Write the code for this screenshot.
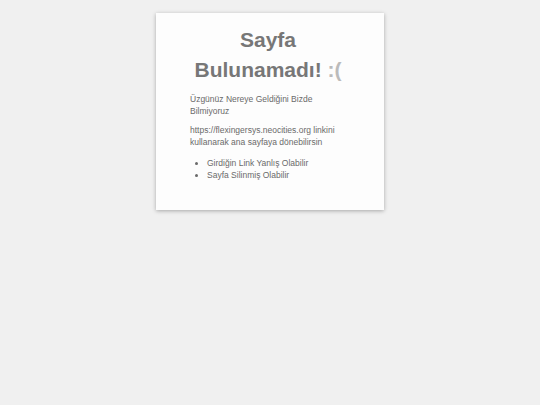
export default function App() {
  return (
    <div className="min-h-[405px] bg-[#f0f0f0] pt-[13px] font-['Liberation_Sans',Arial,sans-serif]">
      <div className="mx-auto w-[228px] bg-[#fdfdfd] pb-[29px] pl-[34px] pr-[38px] pt-[12px] shadow-[0_1px_4px_rgba(0,0,0,0.3)]">
        <h1 className="text-center text-[21px] font-bold leading-[30px] text-[#777]">
          Sayfa Bulunamadı! <span className="text-[#bbb]">:(</span>
        </h1>
        <p className="mt-[7.5px] text-[8.5px] leading-[12px] text-[#6a6a6a]">
          Üzgünüz Nereye Geldiğini Bizde Bilmiyoruz
        </p>
        <p className="mt-[7.5px] text-[8.5px] leading-[12px] text-[#6a6a6a]">
          https://flexingersys.neocities.org linkini kullanarak ana sayfaya dönebilirsin
        </p>
        <ul className="mt-[9px] list-disc pl-[17px] text-[8.5px] leading-[12px] text-[#6a6a6a]">
          <li>Girdiğin Link Yanlış Olabilir</li>
          <li>Sayfa Silinmiş Olabilir</li>
        </ul>
      </div>
    </div>
  );
}
